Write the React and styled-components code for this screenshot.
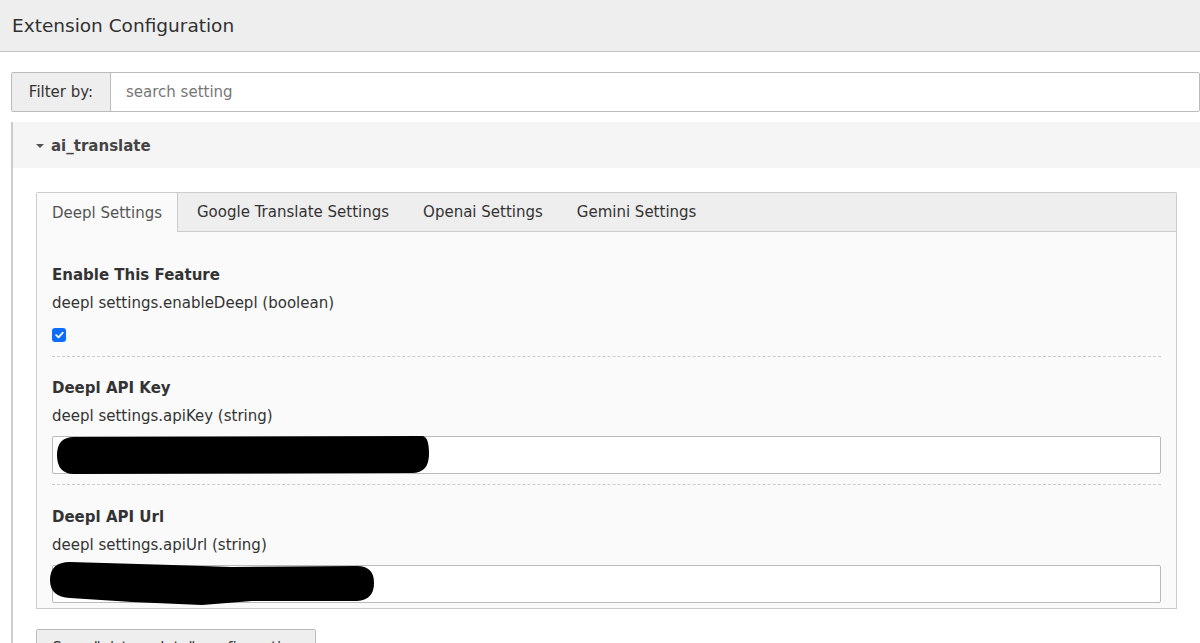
import React from 'react'
import styled, { createGlobalStyle } from 'styled-components'

const GlobalStyle = createGlobalStyle`
  html, body {
    margin: 0;
    padding: 0;
    background: #fff;
    font-family: "DejaVu Sans", Verdana, sans-serif;
    color: #333;
    font-size: 15px;
  }
  * { box-sizing: border-box; }
`

const Page = styled.div`
  width: 1200px;
  height: 643px;
  overflow: hidden;
`

const Header = styled.div`
  height: 52px;
  background: #eee;
  border-bottom: 1px solid #c3c3c3;
  display: flex;
  align-items: center;
  padding: 0 12px;
  font-size: 18.5px;
  color: #313131;
`

const Body = styled.div`
  padding: 20px 0 0 11px;
`

const FilterGroup = styled.div`
  display: flex;
  height: 40px;
  border: 1px solid #bbb;
  border-radius: 2px;
  overflow: hidden;
`

const FilterLabel = styled.label`
  width: 99px;
  background: #eee;
  border-right: 1px solid #bbb;
  display: flex;
  align-items: center;
  justify-content: center;
  color: #333;
`

const FilterInput = styled.input`
  flex: 1;
  border: 0;
  padding: 0 15px;
  font: inherit;
  color: #333;
  outline: none;
  &::placeholder { color: #777; }
`

const Panel = styled.div`
  margin-top: 10px;
  border-left: 2px solid #ccc;
`

const PanelHeading = styled.div`
  height: 46px;
  background: #f5f5f5;
  display: flex;
  align-items: center;
  padding-left: 23px;
  padding-top: 1px;
  gap: 7px;
  font-weight: bold;
  color: #444;
`

const Caret = styled.span`
  width: 0;
  height: 0;
  border-left: 4px solid transparent;
  border-right: 4px solid transparent;
  border-top: 4px solid #555;
  margin-top: 1px;
`

const PanelBody = styled.div`
  padding: 24px 23px 0 23px;
`

const Tabs = styled.div`
  display: flex;
  background: #eee;
  border: 1px solid #ccc;
  border-bottom: 0;
  height: 39px;
  border-radius: 2px 2px 0 0;
`

const Tab = styled.div`
  display: flex;
  align-items: center;
  padding: 0 ${p => (p.$active ? '15px' : '17px')};
  margin-right: ${p => (p.$active ? '2px' : '0')};
  color: ${p => (p.$active ? '#555' : '#333')};
  background: ${p => (p.$active ? '#fafafa' : 'transparent')};
  border-right: ${p => (p.$active ? '1px solid #ccc' : '0')};
  margin-bottom: ${p => (p.$active ? '-1px' : '0')};
  position: relative;
  z-index: 1;
`

const TabContent = styled.div`
  background: #fafafa;
  border: 1px solid #ccc;
  padding: 12px 15px 5px 15px;
`

const Field = styled.div`
  padding: ${p => (p.$last ? '23px' : '22px')} 0 ${p => (p.$last ? '0' : '10px')};
  border-bottom: ${p => (p.$last ? '0' : '1px dashed #ccc')};
`

const FieldTitle = styled.div`
  font-weight: bold;
  color: #333;
  line-height: 18px;
`

const FieldDesc = styled.div`
  margin-top: 10px;
  line-height: 18px;
  color: #333;
`

const Check = styled.span`
  display: flex;
  margin-top: 16px;
  margin-bottom: 4px;
  width: 14px;
  height: 14px;
  border-radius: 3px;
  background: #0d6efd;
  align-items: center;
  justify-content: center;
`

const InputWrap = styled.div`
  position: relative;
  margin-top: 11px;
`

const TextInput = styled.input`
  display: block;
  width: 100%;
  height: 38px;
  border: 1px solid #bbb;
  border-radius: 2px;
  background: #fff;
  font: inherit;
  padding: 0 10px;
  outline: none;
`

const Redact = styled.svg`
  position: absolute;
  left: 0;
  top: 0;
  overflow: visible;
  pointer-events: none;
`

const SaveButton = styled.button`
  margin-top: 20px;
  height: 38px;
  width: 280px;
  padding: 0 14px;
  background: #eee;
  border: 1px solid #bbb;
  border-radius: 2px;
  font: inherit;
  color: #333;
  white-space: nowrap;
`

export default function App() {
  return (
    <Page>
      <GlobalStyle />
      <Header>Extension Configuration</Header>
      <Body>
        <FilterGroup>
          <FilterLabel>Filter by:</FilterLabel>
          <FilterInput placeholder="search setting" />
        </FilterGroup>
        <Panel>
          <PanelHeading>
            <Caret />
            ai_translate
          </PanelHeading>
          <PanelBody>
            <Tabs>
              <Tab $active>Deepl Settings</Tab>
              <Tab>Google Translate Settings</Tab>
              <Tab>Openai Settings</Tab>
              <Tab>Gemini Settings</Tab>
            </Tabs>
            <TabContent>
              <Field>
                <FieldTitle>Enable This Feature</FieldTitle>
                <FieldDesc>deepl settings.enableDeepl (boolean)</FieldDesc>
                <Check>
                  <svg width="9" height="8" viewBox="0 0 9 8">
                    <path d="M1.2 4.2 L3.5 6.3 L7.8 1.6" stroke="#fff" strokeWidth="1.8" fill="none" strokeLinecap="round" strokeLinejoin="round" />
                  </svg>
                </Check>
              </Field>
              <Field>
                <FieldTitle>Deepl API Key</FieldTitle>
                <FieldDesc>deepl settings.apiKey (string)</FieldDesc>
                <InputWrap>
                  <TextInput />
                  <Redact width="380" height="38">
                    <path d="M22 1 L370 0 Q377 0 377 18 Q377 37 360 37 L22 38 Q5 38 5 19 Q5 1 22 1 Z" fill="#000" />
                  </Redact>
                </InputWrap>
              </Field>
              <Field $last>
                <FieldTitle>Deepl API Url</FieldTitle>
                <FieldDesc>deepl settings.apiUrl (string)</FieldDesc>
                <InputWrap>
                  <TextInput />
                  <Redact width="330" height="44">
                    <path d="M18 -3 L120 0 L180 2 L305 1 Q322 1 322 18 Q322 35 305 36 L200 36 L150 40 L80 37 L18 33 Q-2 32 -2 15 Q-2 -3 18 -3 Z" fill="#000" />
                  </Redact>
                </InputWrap>
              </Field>
            </TabContent>
            <SaveButton>Save "ai_translate" configuration</SaveButton>
          </PanelBody>
        </Panel>
      </Body>
    </Page>
  )
}
